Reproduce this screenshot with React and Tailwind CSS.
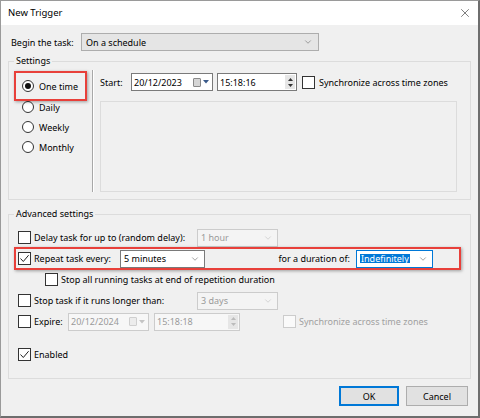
import { X, ChevronDown } from "lucide-react";

function Check({ checked, disabled }) {
  return (
    <span
      className={`flex h-[13px] w-[13px] shrink-0 items-center justify-center border ${
        disabled ? "border-[#cccccc] bg-[#fafafa]" : "border-[#333333] bg-white"
      }`}
    >
      {checked && (
        <svg width="11" height="11" viewBox="0 0 11 11">
          <path d="M1.5 5.5 L4.3 8.5 L9.6 2.2" fill="none" stroke="#222" strokeWidth="1" />
        </svg>
      )}
    </span>
  );
}

function Radio({ on, label }) {
  return (
    <div className="flex h-[20px] items-center gap-[5px]">
      <span className="flex h-[12px] w-[12px] items-center justify-center rounded-full border border-[#333333] bg-white">
        {on && <span className="h-[6px] w-[6px] rounded-full bg-[#111]" />}
      </span>
      <span>{label}</span>
    </div>
  );
}

function Combo({ w, text, disabled, focus }) {
  return (
    <div
      className={`flex h-[18px] shrink-0 items-center justify-between border pl-[3px] pr-[4px] ${
        disabled
          ? "border-[#cccccc] bg-[#f4f4f4] text-[#9a9a9a]"
          : focus
          ? "border-[#0078d7] bg-white"
          : "border-[#7a7a7a] bg-white"
      } ${w}`}
    >
      {focus ? <span className="bg-[#0078d7] px-[1px] text-white">{text}</span> : <span>{text}</span>}
      <ChevronDown size={10} strokeWidth={1.2} color={disabled ? "#b5b5b5" : "#444"} />
    </div>
  );
}

function DateBox({ w, text, disabled }) {
  return (
    <div
      className={`flex h-[18px] shrink-0 items-center justify-between border pl-[2px] pr-[3px] ${
        disabled ? "border-[#cccccc] bg-[#f7f7f7] text-[#9a9a9a]" : "border-[#7a7a7a] bg-white"
      } ${w}`}
    >
      <span>{text}</span>
      <span className="flex items-center gap-[2px]">
        <span
          className={`h-[9px] w-[8px] rounded-[1px] border ${
            disabled ? "border-[#cfcfcf] bg-[#ececec]" : "border-[#8a8a8a] bg-[#d6d6d6]"
          }`}
        />
        <svg width="6" height="4" viewBox="0 0 6 4">
          <path d="M0 0 H6 L3 3.5 Z" fill={disabled ? "#c4c4c4" : "#3a5a8a"} />
        </svg>
      </span>
    </div>
  );
}

function TimeBox({ w, text, disabled }) {
  return (
    <div
      className={`flex h-[18px] shrink-0 items-stretch justify-between border pl-[2px] ${
        disabled ? "border-[#cccccc] bg-[#f7f7f7] text-[#9a9a9a]" : "border-[#7a7a7a] bg-white"
      } ${w}`}
    >
      <span className="flex items-center">{text}</span>
      <span className="my-[1px] mr-[1px] flex w-[10px] flex-col items-center justify-center gap-[3px] bg-[#e6e6e6]">
        <svg width="5" height="3" viewBox="0 0 5 3">
          <path d="M0 3 H5 L2.5 0 Z" fill={disabled ? "#bbb" : "#333"} />
        </svg>
        <svg width="5" height="3" viewBox="0 0 5 3">
          <path d="M0 0 H5 L2.5 3 Z" fill={disabled ? "#bbb" : "#333"} />
        </svg>
      </span>
    </div>
  );
}

export default function App() {
  return (
    <div className="flex h-[418px] w-[480px] flex-col border-l border-t border-b-2 border-r-2 border-l-[#9a9a9a] border-t-[#9a9a9a] border-b-[#6e6e6e] border-r-[#6e6e6e] bg-[#f0f0f0] font-['Noto_Sans',sans-serif] text-[9px] leading-none text-black">
      {/* title bar */}
      <div className="flex h-[24px] shrink-0 items-center justify-between bg-white pl-[7px] pr-[6px]">
        <span className="text-[9.5px]">New Trigger</span>
        <X size={14} strokeWidth={1} color="#222" />
      </div>

      <div className="flex flex-1 flex-col pl-[7px]">
        {/* begin the task */}
        <div className="mt-[8px] flex h-[18px] items-center">
          <span className="w-[73px] pl-[3px]">Begin the task:</span>
          <div className="flex h-[18px] w-[238px] items-center justify-between border border-[#adadad] bg-[#e5e5e5] pl-[4px] pr-[5px]">
            <span>On a schedule</span>
            <ChevronDown size={10} strokeWidth={1.2} color="#555" />
          </div>
        </div>

        {/* Settings */}
        <fieldset className="mt-[3px] w-[463px] border border-[#dcdcdc]">
          <legend className="ml-[5px] px-[2px] leading-[14px]">Settings</legend>
          <div className="flex h-[131px]">
            <div className="flex w-[83px] flex-col pl-[13px] pt-[8px]">
              <div className="relative mb-[1px]">
                <Radio on label="One time" />
                <span className="absolute left-[-8px] top-[-5px] h-[30px] w-[73px] border-2 border-[#e8403a] shadow-[1px_1px_3px_rgba(0,0,0,0.35)]" />
              </div>
              <Radio label="Daily" />
              <Radio label="Weekly" />
              <Radio label="Monthly" />
            </div>
            <div className="mb-[7px] mt-[2px] w-[2px] border-l border-r border-l-[#a8a8a8] border-r-white" />
            <div className="flex flex-col pl-[6px] pt-[5px]">
              <div className="flex h-[18px] items-center">
                <span className="w-[31px]">Start:</span>
                <DateBox w="w-[82px]" text="20/12/2023" />
                <div className="w-[4px]" />
                <TimeBox w="w-[80px]" text="15:18:16" />
                <div className="w-[5px]" />
                <Check />
                <span className="ml-[4px]">Synchronize across time zones</span>
              </div>
              <div className="mt-[10px] h-[91px] w-[357px] border border-[#dcdcdc]" />
            </div>
          </div>
        </fieldset>

        {/* Advanced settings */}
        <fieldset className="mt-[7px] w-[463px] border border-[#dcdcdc]">
          <legend className="ml-[5px] px-[2px] leading-[14px]">Advanced settings</legend>
          <div className="flex flex-col pb-[13px] pl-[9px] pt-[6px]">
            <div className="flex h-[21px] items-center">
              <div className="flex w-[179px] items-center gap-[3px]">
                <Check />
                <span>Delay task for up to (random delay):</span>
              </div>
              <Combo w="w-[81px]" text="1 hour" disabled />
            </div>

            <div className="relative flex h-[21px] items-center">
              <div className="flex w-[102px] items-center gap-[3px]">
                <Check checked />
                <span>Repeat task every:</span>
              </div>
              <Combo w="w-[85px]" text="5 minutes" />
              <span className="w-[145px] text-right">for a duration of:</span>
              <div className="w-[6px]" />
              <Combo w="w-[77px]" text="Indefinitely" focus />
              <span className="absolute left-[-4px] top-[-1px] h-[23px] w-[447px] border-2 border-[#e8403a] shadow-[1px_1px_3px_rgba(0,0,0,0.35)]" />
            </div>

            <div className="flex h-[21px] items-center gap-[3px] pl-[27px]">
              <Check />
              <span>Stop all running tasks at end of repetition duration</span>
            </div>

            <div className="flex h-[21px] items-center">
              <div className="flex w-[179px] items-center gap-[3px]">
                <Check />
                <span>Stop task if it runs longer than:</span>
              </div>
              <Combo w="w-[81px]" text="3 days" disabled />
            </div>

            <div className="flex h-[21px] items-center">
              <div className="flex w-[50px] items-center gap-[3px]">
                <Check />
                <span>Expire:</span>
              </div>
              <DateBox w="w-[81px]" text="20/12/2024" disabled />
              <div className="w-[5px]" />
              <TimeBox w="w-[86px]" text="15:18:18" disabled />
              <div className="w-[43px]" />
              <Check disabled />
              <span className="ml-[3px] text-[#a0a0a0]">Synchronize across time zones</span>
            </div>

            <div className="mt-[12px] flex h-[21px] items-center gap-[3px]">
              <Check checked />
              <span>Enabled</span>
            </div>
          </div>
        </fieldset>

        {/* buttons */}
        <div className="mt-[7px] flex justify-end gap-[7px] pr-[10px]">
          <button className="flex h-[20px] w-[60px] items-center justify-center border border-[#0078d7] bg-[#e1e1e1] shadow-[inset_0_0_0_1px_#0078d7]">
            OK
          </button>
          <button className="flex h-[20px] w-[62px] items-center justify-center border border-[#adadad] bg-[#e1e1e1]">
            Cancel
          </button>
        </div>
      </div>
    </div>
  );
}
